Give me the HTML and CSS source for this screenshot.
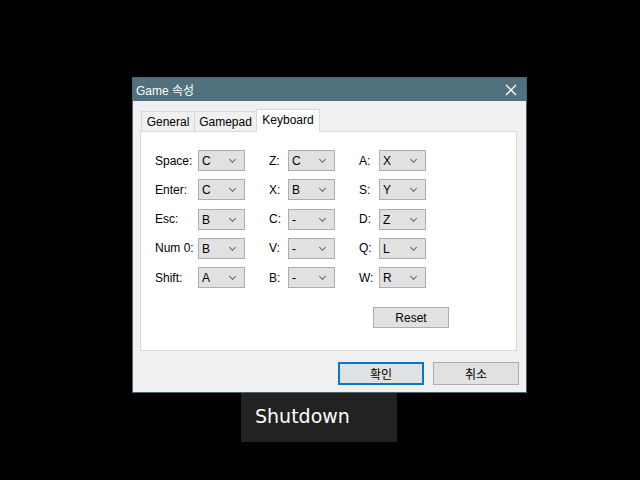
FILE: index.html
```html
<!DOCTYPE html>
<html lang="ko">
<head>
    <meta charset="UTF-8">
    <title>Game 속성</title>
    <link rel="stylesheet" href="styles.css">
</head>
<body>
    <div class="desktop">
        <div class="dialog">
            <div class="titlebar">
                <span class="title">Game 속성</span>
                <svg class="close" width="12" height="12" viewBox="0 0 12 12">
                    <path d="M1 1 L11 11 M11 1 L1 11" stroke="#fff" stroke-width="1.3" fill="none"/>
                </svg>
            </div>
            <div class="dlg-body">
                <ul class="tabs">
                    <li class="tab general">General</li>
                    <li class="tab gamepad">Gamepad</li>
                    <li class="tab keyboard active">Keyboard</li>
                </ul>
                <div class="panel">
                    <div class="keys">
                        <label>Space:</label><div class="select">C</div>
                        <label>Z:</label><div class="select">C</div>
                        <label>A:</label><div class="select">X</div>

                        <label>Enter:</label><div class="select">C</div>
                        <label>X:</label><div class="select">B</div>
                        <label>S:</label><div class="select">Y</div>

                        <label>Esc:</label><div class="select">B</div>
                        <label>C:</label><div class="select">-</div>
                        <label>D:</label><div class="select">Z</div>

                        <label>Num 0:</label><div class="select">B</div>
                        <label>V:</label><div class="select">-</div>
                        <label>Q:</label><div class="select">L</div>

                        <label>Shift:</label><div class="select">A</div>
                        <label>B:</label><div class="select">-</div>
                        <label>W:</label><div class="select">R</div>
                    </div>
                    <button class="btn reset">Reset</button>
                </div>
                <div class="actions">
                    <button class="btn default">확인</button>
                    <button class="btn">취소</button>
                </div>
            </div>
        </div>
        <div class="shutdown">Shutdown</div>
    </div>
</body>
</html>
```

FILE: styles.css
```css
body {
    margin: 0;
    background: #000;
    font-family: "Liberation Sans", "Noto Sans CJK KR", sans-serif;
    font-size: 12px;
    color: #000;
}

.desktop {
    position: relative;
    width: 640px;
    height: 480px;
    overflow: hidden;
}

/* Dialog window */
.dialog {
    position: absolute;
    left: 132px;
    top: 77px;
    width: 393px;
    height: 314px;
    border: 1px solid #4a6572;
    background: #f0f0f0;
}

.titlebar {
    height: 23px;
    background: #52717f;
    color: #fff;
    display: flex;
    align-items: center;
    justify-content: space-between;
    padding: 0 9px 0 3px;
}

.title {
    font-size: 12px;
}

.close {
    display: block;
}

.dlg-body {
    padding: 8px 7px 0 7px;
}

/* Tabs */
.tabs {
    list-style: none;
    margin: 0;
    padding: 0 0 0 1px;
    display: flex;
    align-items: flex-end;
    height: 22px;
}

.tab {
    box-sizing: border-box;
    height: 20px;
    line-height: 21px;
    text-align: center;
    border: 1px solid #d9d9d9;
    border-bottom: none;
    background: #f0f0f0;
    margin-right: -1px;
}

.general { width: 54px; }
.gamepad { width: 63px; }
.keyboard { width: 64px; }

.tab.active {
    height: 23px;
    line-height: 21px;
    background: #fff;
    position: relative;
    z-index: 1;
    margin-bottom: -1px;
}

.panel {
    width: 377px;
    height: 220px;
    border: 1px solid #d9d9d9;
    background: #fff;
    padding: 18px 0 0 14px;
    box-sizing: border-box;
}

.keys {
    display: grid;
    grid-template-columns: 43px 47px 24px 19px 47px 24px 20px 47px;
    grid-auto-rows: 21px;
    row-gap: 8.25px;
}

.keys label:nth-of-type(3n+2) {
    grid-column: 4;
}

.keys label:nth-of-type(3n) {
    grid-column: 7;
}

.keys label {
    display: flex;
    align-items: center;
    white-space: nowrap;
}

.select {
    box-sizing: border-box;
    border: 1px solid #adadad;
    background: #e1e1e1;
    padding-left: 3px;
    line-height: 20px;
    position: relative;
}

.select::after {
    content: "";
    position: absolute;
    right: 9px;
    top: 6px;
    width: 4px;
    height: 4px;
    border-right: 1px solid #666;
    border-bottom: 1px solid #666;
    transform: rotate(45deg);
}

/* Buttons */
.btn {
    font-family: "Liberation Sans", "Noto Sans CJK KR", sans-serif;
    font-size: 12px;
    background: #e1e1e1;
    border: 1px solid #adadad;
    padding: 0;
    color: #000;
}

.reset {
    display: block;
    width: 76px;
    height: 21px;
    margin: 19px 0 0 218px;
}

.actions {
    display: flex;
    justify-content: flex-end;
    gap: 9px;
    margin-top: 11px;
}

.actions .btn {
    width: 86px;
    height: 23px;
}

.btn.default {
    border: 2px solid #0078d7;
}

/* Shutdown overlay */
.shutdown {
    position: absolute;
    left: 241px;
    top: 393px;
    width: 156px;
    height: 49px;
    box-sizing: border-box;
    background: #222;
    color: #fff;
    font-family: "DejaVu Sans", sans-serif;
    font-size: 19px;
    padding: 12px 0 0 14px;
}
```
